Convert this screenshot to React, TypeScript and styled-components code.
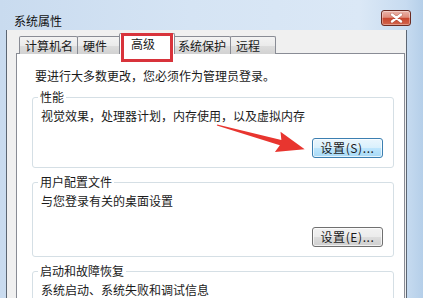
import React from 'react'
import styled, { createGlobalStyle } from 'styled-components'

const GlobalStyle = createGlobalStyle`
  html, body {
    margin: 0;
    padding: 0;
  }
  body {
    font-family: "Noto Sans CJK SC", "Noto Sans", sans-serif;
    font-size: 12px;
    color: #1a1a1a;
    background: #c9dcf0;
  }
`

interface TabInfo {
  label: string
  width: number
  active?: boolean
}

const tabs: TabInfo[] = [
  { label: '计算机名', width: 59 },
  { label: '硬件', width: 44 },
  { label: '高级', width: 56, active: true },
  { label: '系统保护', width: 59 },
  { label: '远程', width: 46 },
]

const App: React.FC = () => {
  return (
    <Window>
      <GlobalStyle />
      <TitleBar>
        <Title>系统属性</Title>
        <CloseButton aria-label="关闭">
          <svg width="13" height="10" viewBox="0 0 13 10">
            <path d="M2 1.5 L11 8.5 M11 1.5 L2 8.5" stroke="#7a2a1c" strokeWidth="3.4" strokeLinecap="round" opacity="0.45" />
            <path d="M2 1.5 L11 8.5 M11 1.5 L2 8.5" stroke="#fff" strokeWidth="2.4" strokeLinecap="round" />
          </svg>
        </CloseButton>
      </TitleBar>

      <Client>
        <TabStrip>
          {tabs.map(t => (
            <Tab key={t.label} $width={t.width} $active={t.active}>
              {t.label}
            </Tab>
          ))}
        </TabStrip>

        <Panel>
          <Intro>要进行大多数更改，您必须作为管理员登录。</Intro>

          <Group>
            <Legend>性能</Legend>
            <Desc>视觉效果，处理器计划，内存使用，以及虚拟内存</Desc>
            <ButtonRow $gap={14}>
              <Button $focused>设置(S)...</Button>
            </ButtonRow>
          </Group>

          <Group>
            <Legend>用户配置文件</Legend>
            <Desc>与您登录有关的桌面设置</Desc>
            <ButtonRow $gap={18}>
              <Button>设置(E)...</Button>
            </ButtonRow>
          </Group>

          <Group>
            <Legend>启动和故障恢复</Legend>
            <Desc>系统启动、系统失败和调试信息</Desc>
          </Group>
        </Panel>
      </Client>

      {/* red annotation arrow drawn over the dialog */}
      <Annotation viewBox="0 0 423 298">
        <g transform="translate(217 125) rotate(15.5)">
          <path
            d="M0 -0.6 L66 -2.8 L63 -10.5 L91 0 L63 10.5 L66 2.8 L0 0.6 Z"
            fill="#e8352f"
          />
        </g>
      </Annotation>
    </Window>
  )
}

const Window = styled.div`
  position: relative;
  width: 423px;
  height: 298px;
  overflow: hidden;
  display: flex;
  flex-direction: column;
  background: linear-gradient(to right, #c9dbef 0%, #d5e4f4 45%, #dbe8f6 85%, #c7dbf0 96%, #b5cfe9 100%);
`

const TitleBar = styled.div`
  height: 30px;
  flex-shrink: 0;
  box-sizing: border-box;
  display: flex;
  justify-content: space-between;
  align-items: flex-start;
  padding: 0 12px 0 14px;
`

const Title = styled.div`
  margin-top: 14px;
  line-height: 14px;
  font-size: 12px;
  color: #111;
`

const CloseButton = styled.div`
  margin-top: 10px;
  width: 30px;
  height: 16px;
  box-sizing: border-box;
  border: 1px solid #6b2b22;
  border-radius: 3px;
  display: flex;
  align-items: center;
  justify-content: center;
  background: linear-gradient(#ebb5aa 0%, #df8d7c 45%, #c8472f 52%, #d2654c 100%);
  box-shadow: inset 0 0 0 1px rgba(255, 255, 255, 0.35);
`

const Client = styled.div`
  flex: 1;
  margin: 0 16px 0 6px;
  border-left: 1px solid #5c6673;
  border-right: 1px solid #5c6673;
  background: #f0f0f0;
  padding: 3px 1px 0 9px;
  display: flex;
  flex-direction: column;
  min-height: 0;
`

const TabStrip = styled.div`
  height: 21px;
  flex-shrink: 0;
  display: flex;
  align-items: flex-end;
  padding-left: 3px;
  position: relative;
  z-index: 1;
`

const Tab = styled.div<{ $width: number; $active?: boolean }>`
  position: relative;
  width: ${p => p.$width}px;
  height: ${p => (p.$active ? 21 : 18)}px;
  box-sizing: border-box;
  margin-left: ${p => (p.$active ? -2 : -1)}px;
  margin-right: ${p => (p.$active ? -2 : 0)}px;
  padding-left: ${p => (p.$active ? 11 : 5)}px;
  padding-top: ${p => (p.$active ? 2 : 1)}px;
  border: 1px solid #898c95;
  border-bottom: none;
  border-radius: 2px 2px 0 0;
  line-height: 15px;
  font-size: 12px;
  white-space: nowrap;
  z-index: ${p => (p.$active ? 2 : 1)};
  background: ${p =>
    p.$active ? '#ffffff' : 'linear-gradient(#f3f3f3 0%, #ebebeb 50%, #dddddd 51%, #d2d2d2 100%)'};

  &:first-child {
    margin-left: 0;
  }

  ${p =>
    p.$active &&
    `
    &::after {
      content: '';
      position: absolute;
      left: 1px;
      right: 1px;
      top: -1px;
      bottom: -8px;
      border: 3px solid #d8333b;
    }
  `}
`

const Panel = styled.div`
  flex: 1;
  margin-top: -1px;
  background: #fff;
  border: 1px solid #898c95;
  border-bottom: none;
  padding: 14px 10px 0 15px;
  position: relative;
  z-index: 0;
`

const Intro = styled.div`
  padding-left: 3px;
  line-height: 16px;
  margin-bottom: 6px;
`

const Group = styled.fieldset`
  margin: 0 0 7px;
  border: 1px solid #d5dfe5;
  border-radius: 3px;
  padding: 2px 10px 9px 8px;
  min-width: 0;
`

const Legend = styled.legend`
  padding: 0 2px;
  margin-left: -3px;
  line-height: 14px;
  font-size: 12px;
`

const Desc = styled.div`
  line-height: 16px;
  margin-top: 2px;
`

const ButtonRow = styled.div<{ $gap: number }>`
  display: flex;
  justify-content: flex-end;
  margin-top: ${p => p.$gap}px;
`

const Button = styled.button<{ $focused?: boolean }>`
  width: 71px;
  height: 20px;
  box-sizing: border-box;
  padding: 0;
  font-family: inherit;
  font-size: 12px;
  letter-spacing: 0.6px;
  color: #1a1a1a;
  line-height: 16px;
  border-radius: 3px;
  border: 1px solid ${p => (p.$focused ? '#3c7fb1' : '#707070')};
  background: ${p =>
    p.$focused
      ? 'linear-gradient(#eaf6fd 0%, #d9f0fc 50%, #bee6fd 51%, #a7d9f5 100%)'
      : 'linear-gradient(#f2f2f2 0%, #ebebeb 50%, #dddddd 51%, #cfcfcf 100%)'};
  box-shadow: inset 0 0 0 1px rgba(255, 255, 255, 0.7);
`

const Annotation = styled.svg`
  position: absolute;
  left: 0;
  top: 0;
  width: 423px;
  height: 298px;
  pointer-events: none;
  z-index: 5;
`

export default App
